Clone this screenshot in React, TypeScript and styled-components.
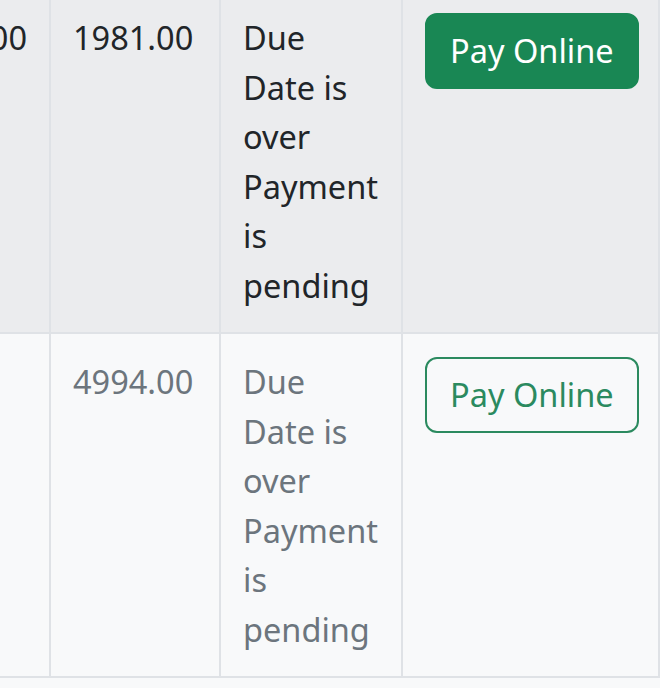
import React from "react";
import styled, { createGlobalStyle } from "styled-components";

const Global = createGlobalStyle`
  html, body { margin: 0; padding: 0; background: #f8f9fa; }
  body { font-family: "Noto Sans", "Open Sans", sans-serif; overflow: hidden; }
`;

const Viewport = styled.div`
  width: 660px;
  height: 688px;
  overflow: hidden;
`;

const Table = styled.table`
  border-collapse: collapse;
  table-layout: fixed;
  width: 780px;
  margin-left: -122px;
  margin-top: -12px;
  font-size: 32.5px;
  line-height: 49.5px;
`;

const Col = styled.col<{ $w: number }>`
  width: ${(p) => p.$w}px;
`;

const Row = styled.tr<{ $muted?: boolean }>`
  background: ${(p) => (p.$muted ? "#f8f9fa" : "#ebecee")};
  color: ${(p) => (p.$muted ? "#6c757d" : "#212529")};
`;

const Cell = styled.td<{ $right?: boolean }>`
  border: 2px solid #dfe2e6;
  padding: 23px 22px 22px 22px;
  vertical-align: top;
  text-align: ${(p) => (p.$right ? "right" : "left")};
  white-space: ${(p) => (p.$right ? "nowrap" : "normal")};
`;

const PayButton = styled.button<{ $outline?: boolean }>`
  font-family: inherit;
  font-size: 32.5px;
  line-height: 49.5px;
  padding: 11px 23px;
  border-radius: 12px;
  border: 2px solid ${(p) => (p.$outline ? "#2b8a5f" : "#198754")};
  background: ${(p) => (p.$outline ? "transparent" : "#198754")};
  color: ${(p) => (p.$outline ? "#2b8a5f" : "#ffffff")};
  white-space: nowrap;
  cursor: pointer;
`;

const rows = [
  { first: "1981.00", amount: "1981.00", muted: false },
  { first: "", amount: "4994.00", muted: true },
];

export default function App() {
  return (
    <Viewport>
      <Global />
      <Table>
        <colgroup>
          <Col $w={171} />
          <Col $w={170} />
          <Col $w={182} />
          <Col $w={257} />
        </colgroup>
        <tbody>
          {rows.map((r, i) => (
            <Row key={i} $muted={r.muted}>
              <Cell $right>{r.first}</Cell>
              <Cell>{r.amount}</Cell>
              <Cell>Due Date is over Payment is pending</Cell>
              <Cell>
                <PayButton $outline={r.muted}>Pay Online</PayButton>
              </Cell>
            </Row>
          ))}
        </tbody>
      </Table>
    </Viewport>
  );
}
